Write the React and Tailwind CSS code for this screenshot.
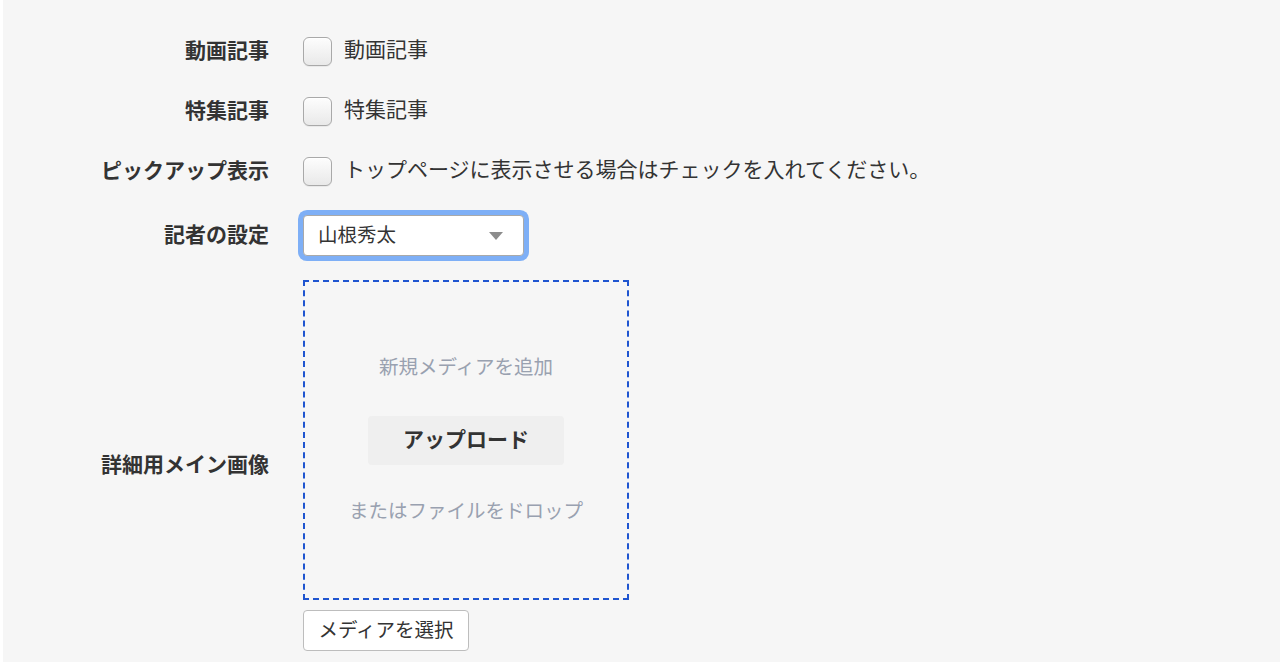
const font = { fontFamily: '"Noto Sans CJK JP", "Noto Sans", sans-serif' };

function Checkbox() {
  return (
    <span className="inline-block w-[29px] h-[29px] rounded-[6px] border border-[#a9a9a9] bg-gradient-to-b from-[#fdfdfd] to-[#e9e9e9] shadow-[inset_0_1px_1px_rgba(255,255,255,0.9),0_1px_0_rgba(0,0,0,0.05)] shrink-0" />
  );
}

function Row({ label, children, className = "" }) {
  return (
    <div className={`flex items-center ${className}`}>
      <div className="w-[266px] text-right text-[21px] font-bold text-[#333] leading-none -translate-y-[2px]">
        {label}
      </div>
      <div className="ml-[34px] flex items-center">{children}</div>
    </div>
  );
}

export default function App() {
  const checks = [
    { label: "動画記事", text: "動画記事" },
    { label: "特集記事", text: "特集記事" },
    { label: "ピックアップ表示", text: "トップページに表示させる場合はチェックを入れてください。" },
  ];

  return (
    <div className="w-[1280px] h-[662px] bg-white flex overflow-hidden" style={font}>
      <div className="w-[3px] bg-white" />
      <div className="flex-1 bg-[#f6f6f6] pt-[21px]">
        {checks.map((c) => (
          <Row key={c.label} label={c.label} className="h-[60px]">
            <Checkbox />
            <span className="ml-[12px] text-[21px] text-[#333] leading-none -translate-y-[3px]">{c.text}</span>
          </Row>
        ))}

        {/* 記者 */}
        <Row label="記者の設定" className="mt-[14px] h-[41px]">
          <div className="w-[221px] h-[41px] rounded-[4px] border border-[#a9a9a9] bg-white shadow-[0_0_0_5px_#7eaff6] flex items-center justify-between pl-[14px] pr-[20px]">
            <span className="text-[19.5px] text-[#333] leading-none -translate-y-[2px]">山根秀太</span>
            <svg width="14" height="8" viewBox="0 0 14 8">
              <path d="M0 0 L14 0 L7 8 Z" fill="#8c8c8c" />
            </svg>
          </div>
        </Row>

        {/* 画像 */}
        <Row label="詳細用メイン画像" className="mt-[24px]">
          <div className="flex flex-col">
            <div className="w-[326px] h-[320px] border-2 border-dashed border-[#1f55d0] flex flex-col items-center justify-center">
              <span className="text-[19.5px] text-[#99a1b0] leading-none -translate-y-[4px]">新規メディアを追加</span>
              <button className="mt-[37px] w-[196px] h-[49px] rounded-[4px] bg-[#efefef] text-[21px] font-bold text-[#333] leading-none">
                <span className="inline-block -translate-y-[2px]">アップロード</span>
              </button>
              <span className="mt-[36px] text-[19.5px] text-[#99a1b0] leading-none -translate-y-[1px]">またはファイルをドロップ</span>
            </div>
            <button className="mt-[10px] w-[166px] h-[41px] rounded-[4px] border border-[#bdbdbd] bg-white text-[19.5px] text-[#333] leading-none">
              <span className="inline-block -translate-y-[2px]">メディアを選択</span>
            </button>
          </div>
        </Row>
      </div>
    </div>
  );
}
